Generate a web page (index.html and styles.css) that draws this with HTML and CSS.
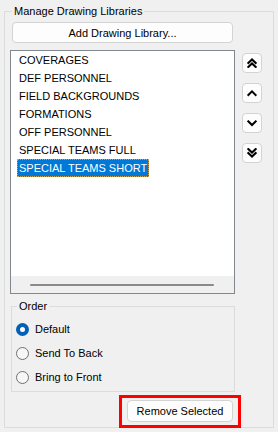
FILE: index.html
```html
<!DOCTYPE html>
<html>
<head>
<meta charset="utf-8">
<link rel="stylesheet" href="styles.css">
</head>
<body>
<fieldset class="group outer">
  <legend class="group-title">Manage Drawing Libraries</legend>
  <button class="btn add-btn">Add Drawing Library...</button>
  <div class="lib-row">
    <div class="listbox">
      <ul class="items">
        <li class="item">COVERAGES</li>
        <li class="item">DEF PERSONNEL</li>
        <li class="item">FIELD BACKGROUNDS</li>
        <li class="item">FORMATIONS</li>
        <li class="item">OFF PERSONNEL</li>
        <li class="item">SPECIAL TEAMS FULL</li>
        <li class="item selected">SPECIAL TEAMS SHORT</li>
      </ul>
      <div class="hscroll"><div class="thumb"></div></div>
    </div>
    <div class="move-col">
      <button class="btn icon-btn" title="Move to top">
        <svg viewBox="0 0 10 10" width="10" height="10"><polyline points="1.3,5 5,1.5 8.7,5"/><polyline points="1.3,9 5,5.5 8.7,9"/></svg>
      </button>
      <button class="btn icon-btn" title="Move up">
        <svg viewBox="0 0 10 10" width="10" height="10"><polyline points="1.3,7 5,3.3 8.7,7"/></svg>
      </button>
      <button class="btn icon-btn" title="Move down">
        <svg viewBox="0 0 10 10" width="10" height="10"><polyline points="1.3,3.3 5,7 8.7,3.3"/></svg>
      </button>
      <button class="btn icon-btn" title="Move to bottom">
        <svg viewBox="0 0 10 10" width="10" height="10"><polyline points="1.3,1 5,4.5 8.7,1"/><polyline points="1.3,5 5,8.5 8.7,5"/></svg>
      </button>
    </div>
  </div>
  <fieldset class="group order">
    <legend class="group-title">Order</legend>
    <label class="radio checked"><span class="radio-dot"></span>Default</label>
    <label class="radio"><span class="radio-dot"></span>Send To Back</label>
    <label class="radio"><span class="radio-dot"></span>Bring to Front</label>
  </fieldset>
  <div class="actions">
    <div class="callout">
      <button class="btn remove-btn">Remove Selected</button>
    </div>
  </div>
</fieldset>
</body>
</html>
```

FILE: styles.css
```css
html, body {
  margin: 0;
}
body {
  background: #f0f0f0;
  font-family: "Liberation Sans", Arial, sans-serif;
  font-size: 11px;
  color: #000;
  padding: 4px 4px 0 4px;
  width: 278px;
  height: 432px;
  box-sizing: border-box;
  overflow: hidden;
}
.group {
  border: 1px solid #dcdcdc;
  margin: 0;
  min-width: 0;
  box-sizing: border-box;
}
.group-title {
  padding: 0 2px;
  margin-left: 2px;
  line-height: 14px;
  font-size: 11px;
}
.outer {
  height: 424px;
  padding: 4px 5px 0 5px;
}
.btn {
  font-family: inherit;
  font-size: 11px;
  color: #000;
  background: #fdfdfd;
  border: 1px solid #d3d3d3;
  border-radius: 4px;
  padding: 0;
  margin: 0;
  box-sizing: border-box;
  display: flex;
  align-items: center;
  justify-content: center;
}
.add-btn {
  margin-left: 2px;
  width: 221px;
  height: 21px;
}
.lib-row {
  display: flex;
  margin-top: 7px;
}
.listbox {
  width: 225px;
  height: 244px;
  border: 1px solid #828790;
  background: #fff;
  box-sizing: border-box;
  display: flex;
  flex-direction: column;
}
.items {
  list-style: none;
  margin: 0;
  padding: 0 0 0 6px;
  flex: 1;
}
.item {
  width: fit-content;
  line-height: 18px;
  padding: 0 2px;
  white-space: nowrap;
}
.item.selected {
  background: #0078d7;
  color: #fff;
  outline: 1px dotted #c9a25a;
  outline-offset: -1px;
}
.hscroll {
  height: 17px;
  background: #f0f0f0;
  padding: 8px 20px 0 19px;
  box-sizing: border-box;
}
.thumb {
  height: 2px;
  border-radius: 1px;
  background: #8a8a8a;
}
.move-col {
  display: flex;
  flex-direction: column;
  gap: 10px;
  margin-left: 7px;
  padding-top: 3px;
}
.icon-btn {
  width: 20px;
  height: 20px;
}
.icon-btn svg {
  fill: none;
  stroke: #000;
  stroke-width: 2;
  stroke-linecap: square;
}
.order {
  margin: 5px 0 0 1px;
  width: 224px;
  padding: 4px 0 2px 4px;
}
.order .group-title {
  margin-left: 1px;
}
.radio {
  display: flex;
  align-items: center;
  height: 24px;
  gap: 6px;
}
.radio-dot {
  width: 13px;
  height: 13px;
  border-radius: 50%;
  border: 1px solid #6f6f6f;
  background: #f7f7f7;
  box-sizing: border-box;
}
.radio.checked .radio-dot {
  border: 4px solid #005fb8;
  background: #fff;
}
.actions {
  margin-top: 3px;
}
.callout {
  margin-left: 109px;
  width: 122px;
  height: 33px;
  border: 3px solid #f00;
  box-sizing: border-box;
  padding: 2px 0 0 5px;
}
.remove-btn {
  width: 106px;
  height: 22px;
}
```
